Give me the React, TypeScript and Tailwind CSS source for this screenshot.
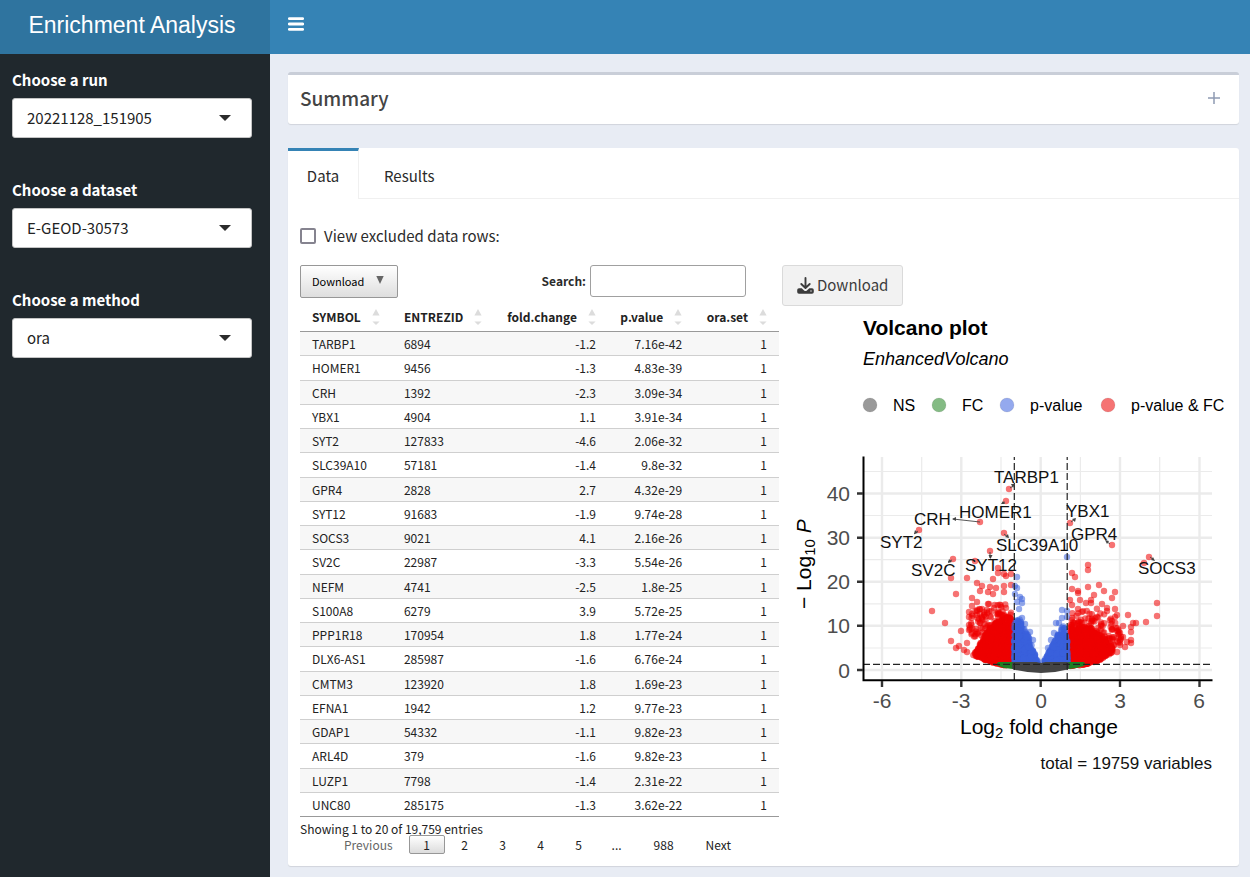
import React from "react";

const SANS = "font-['Noto_Sans_CJK_SC',sans-serif]";

type Row = [string, string, string, string];

const rows: Row[] = [
  ["TARBP1", "6894", "-1.2", "7.16e-42"],
  ["HOMER1", "9456", "-1.3", "4.83e-39"],
  ["CRH", "1392", "-2.3", "3.09e-34"],
  ["YBX1", "4904", "1.1", "3.91e-34"],
  ["SYT2", "127833", "-4.6", "2.06e-32"],
  ["SLC39A10", "57181", "-1.4", "9.8e-32"],
  ["GPR4", "2828", "2.7", "4.32e-29"],
  ["SYT12", "91683", "-1.9", "9.74e-28"],
  ["SOCS3", "9021", "4.1", "2.16e-26"],
  ["SV2C", "22987", "-3.3", "5.54e-26"],
  ["NEFM", "4741", "-2.5", "1.8e-25"],
  ["S100A8", "6279", "3.9", "5.72e-25"],
  ["PPP1R18", "170954", "1.8", "1.77e-24"],
  ["DLX6-AS1", "285987", "-1.6", "6.76e-24"],
  ["CMTM3", "123920", "1.8", "1.69e-23"],
  ["EFNA1", "1942", "1.2", "9.77e-23"],
  ["GDAP1", "54332", "-1.1", "9.82e-23"],
  ["ARL4D", "379", "-1.6", "9.82e-23"],
  ["LUZP1", "7798", "-1.4", "2.31e-22"],
  ["UNC80", "285175", "-1.3", "3.62e-22"],
];

/* ---------- sidebar ---------- */

function Picker({ id, label, options }: { id: string; label: string; options: string[] }) {
  return (
    <div className="flex flex-col gap-2">
      <label htmlFor={id} className="text-[15px] leading-5 font-bold text-white">
        {label}
      </label>
      <div className="relative">
        <select
          id={id}
          className="h-10 w-full appearance-none rounded-[3px] border border-[#c4c4c4] bg-white pl-[14px] pr-9 text-[15px] text-[#222]"
        >
          {options.map((o) => (
            <option key={o}>{o}</option>
          ))}
        </select>
        <svg
          viewBox="0 0 12 6"
          className="pointer-events-none absolute top-[17px] right-[21px] h-[6px] w-3"
          aria-hidden="true"
        >
          <path d="M0 0h12L6 6z" fill="#2b2b2b" />
        </svg>
      </div>
    </div>
  );
}

/* ---------- table ---------- */

function SortIcon() {
  return (
    <svg viewBox="0 0 8 16" className="absolute top-[6px] right-[12px] h-4 w-2" aria-hidden="true">
      <path d="M4 0l3.6 6.5H.4z M.4 12.5h7.2L4 16z" fill="#dcdcdc" />
    </svg>
  );
}

function Th({ children, className }: { children: string; className: string }) {
  return (
    <th scope="col" className={`relative border-b border-[#999] p-0 pl-3 font-bold ${className}`}>
      {children}
      <SortIcon />
    </th>
  );
}

function GeneTable() {
  return (
    <table className="mt-[5px] h-[514px] w-full table-fixed border-separate border-spacing-0 text-[12px] leading-4 text-[#222]">
      <thead>
        <tr className="h-[29px]">
          <Th className="w-[19.2%] text-left">SYMBOL</Th>
          <Th className="w-[21.3%] text-left">ENTREZID</Th>
          <Th className="w-[23.8%] pr-[31px] text-right">fold.change</Th>
          <Th className="w-[18%] pr-[31px] text-right">p.value</Th>
          <Th className="w-[17.7%] pr-[31px] text-right">ora.set</Th>
        </tr>
      </thead>
      <tbody>
        {rows.map(([symbol, id, fc, p], i) => {
          const edge = i === rows.length - 1 ? "border-[#999]" : "border-[#cfcfcf]";
          const cell = `border-b px-3 pt-px pb-0 ${edge}`;
          return (
            <tr key={symbol} className="odd:bg-[#f7f7f7]">
              <td className={cell}>{symbol}</td>
              <td className={cell}>{id}</td>
              <td className={`${cell} text-right`}>{fc}</td>
              <td className={`${cell} text-right`}>{p}</td>
              <td className={`${cell} text-right`}>1</td>
            </tr>
          );
        })}
      </tbody>
    </table>
  );
}

function Pager() {
  const base = "h-[19px] min-w-9 rounded-[2px] border px-3 leading-4";
  return (
    <nav aria-label="Table pages" className="-mt-[2px] flex items-center gap-[2px] pl-[31px] text-[12px] text-[#222]">
      <button className={`${base} mr-[1px] border-transparent text-[#666]`}>Previous</button>
      <button className={`${base} border-[#979797] bg-linear-to-b from-white to-[#dcdcdc]`}>1</button>
      {["2", "3", "4", "5"].map((n) => (
        <button key={n} className={`${base} border-transparent`}>
          {n}
        </button>
      ))}
      <span className="w-9 text-center leading-4">...</span>
      <button className={`${base} w-[54px] border-transparent`}>988</button>
      <button className={`${base} border-transparent`}>Next</button>
    </nav>
  );
}

/* ---------- volcano plot ---------- */

type Pt = [number, number];

const redPoints: Pt[] = [
  [1009, 489], [1006, 501], [980, 522], [919, 530], [1004, 533], [990, 551], [953, 559], [975, 561],
  [951, 578], [967, 578], [998, 568], [998, 573], [1006, 576], [1004, 574], [1011, 574], [993, 579], [956, 594], [977, 583],
  [982, 586], [980, 591], [990, 587], [996, 588], [1004, 586], [1011, 585], [988, 592], [993, 594],
  [1004, 592], [972, 598], [977, 602], [972, 606], [932, 611], [969, 612], [988, 604], [977, 610],
  [982, 609], [972, 614], [945, 623], [961, 631], [951, 641], [956, 648], [959, 646], [967, 643],
  [967, 652], [964, 650], [969, 625], [972, 633], [969, 630], [969, 617], [1070, 523], [1112, 545],
  [1149, 557], [1144, 563], [1088, 565], [1088, 570], [1072, 573], [1075, 577], [1099, 585], [1088, 587],
  [1072, 589], [1078, 591], [1078, 593], [1104, 591], [1115, 592], [1094, 595], [1112, 598], [1157, 603],
  [1157, 616], [1128, 615], [1117, 615], [1102, 604], [1107, 608], [1107, 611], [1080, 600], [1086, 603],
  [1091, 603], [1091, 600], [1115, 609], [1072, 605], [1078, 609], [1146, 622], [1136, 623], [1133, 623],
  [1123, 626], [1112, 629], [1131, 627], [1131, 632], [1123, 637], [1131, 640], [1131, 643], [1125, 647],
  [1117, 652], [1120, 645], [1127, 642], [1117, 631], [1112, 621], [1120, 640], [1070, 600], [1115, 617],
];

const bluePoints: Pt[] = [
  [1017, 577], [1015, 586], [1017, 588], [1020, 597], [1022, 599], [1017, 602], [1019, 609], [1015, 594],
  [1022, 603], [1067, 557], [1062, 610], [1067, 611], [1062, 618], [1059, 623], [1056, 623], [1054, 633],
  [1048, 648], [1051, 640], [1067, 617], [1022, 618], [1025, 624], [1030, 632], [1033, 640],
];

const redLeft: Pt[] = [[1012, 612], [1002, 617], [990, 628], [982, 640], [977, 650], [973, 655], [985, 660], [1000, 665], [1012, 666]];
const redRight: Pt[] = [[1070, 622], [1085, 622], [1096, 630], [1106, 640], [1114, 650], [1110, 654], [1098, 661], [1083, 665], [1070, 666]];
const blueLeft: Pt[] = [[1014, 612], [1017, 614], [1023, 626], [1029, 637], [1033, 650], [1038, 661], [1038, 666], [1014, 666]];
const blueRight: Pt[] = [[1067, 626], [1063, 625], [1055, 640], [1050, 650], [1044, 661], [1044, 666], [1068, 666]];

function inside([x, y]: Pt, poly: Pt[]) {
  let hit = false;
  for (let i = 0, j = poly.length - 1; i < poly.length; j = i++) {
    const [xi, yi] = poly[i];
    const [xj, yj] = poly[j];
    if (yi > y !== yj > y && x < ((xj - xi) * (y - yi)) / (yj - yi) + xi) hit = !hit;
  }
  return hit;
}

/* Seeded scatter, so that the cloud is the same on every render. */
function scatter(poly: Pt[], count: number, seed: number): Pt[] {
  let s = seed;
  const next = () => {
    s = (s * 1664525 + 1013904223) % 4294967296;
    return s / 4294967296;
  };
  const xs = poly.map((p) => p[0]);
  const ys = poly.map((p) => p[1]);
  const x0 = Math.min(...xs);
  const y0 = Math.min(...ys);
  const w = Math.max(...xs) - x0;
  const h = Math.max(...ys) - y0;
  const out: Pt[] = [];
  while (out.length < count) {
    const p: Pt = [x0 + next() * w, y0 + Math.pow(next(), 0.6) * h];
    if (inside(p, poly)) out.push(p);
  }
  return out;
}

const reds = [
  ...redPoints,
  ...scatter(redLeft, 900, 7),
  ...scatter([[1011, 592], [996, 600], [970, 614], [970, 640], [1011, 640]], 120, 21),
  ...scatter(redRight, 900, 11),
  ...scatter([[1071, 606], [1100, 608], [1116, 622], [1124, 640], [1112, 652], [1071, 640]], 130, 33),
];
const blues = [...bluePoints, ...scatter(blueLeft, 450, 5), ...scatter(blueRight, 450, 9)];

function Dots({ points, fill }: { points: Pt[]; fill: string }) {
  return (
    <g fill={fill} fillOpacity="0.55">
      {points.map(([x, y], i) => (
        <circle key={i} cx={x} cy={y} r="3.2" />
      ))}
    </g>
  );
}

const geneLabels: [string, number, number][] = [
  ["TARBP1", 994, 483],
  ["HOMER1", 959, 518],
  ["CRH", 914, 525],
  ["YBX1", 1066, 517],
  ["SYT2", 880, 548],
  ["SLC39A10", 996, 551],
  ["GPR4", 1071, 540],
  ["SYT12", 965, 571],
  ["SV2C", 911, 576],
  ["SOCS3", 1138, 574],
];

const legend: [string, string, number, number][] = [
  ["NS", "#999999", 870, 893],
  ["FC", "#84bb84", 939, 962],
  ["p-value", "#94a9ee", 1007, 1030],
  ["p-value & FC", "#f57373", 1108, 1131],
];

function VolcanoPlot() {
  return (
    <svg
      viewBox="782 306 445 480"
      className="block w-full overflow-visible font-['Liberation_Sans',sans-serif]"
      role="img"
      aria-label="Volcano plot"
    >
      <text x="863" y="335" fontSize="21" fontWeight="700">Volcano plot</text>
      <text x="863" y="365" fontSize="18" fontStyle="italic">EnhancedVolcano</text>
      {legend.map(([name, fill, cx, tx]) => (
        <g key={name}>
          <circle cx={cx} cy="405" r="7" fill={fill} stroke="#000" strokeOpacity="0.08" />
          <text x={tx} y="411" fontSize="16">{name}</text>
        </g>
      ))}

      <g stroke="#ebebeb" fill="none">
        <path strokeWidth="1.2" d="M921.7 457V680M1001 457V680M1080.4 457V680M1159.7 457V680M863 471.5H1212M863 515.5H1212M863 559.7H1212M863 603.8H1212M863 648H1212" />
        <path strokeWidth="2.4" d="M882 457V680M961.3 457V680M1040.7 457V680M1120 457V680M1199.5 457V680M863 493.5H1212M863 537.8H1212M863 581.8H1212M863 625.8H1212M863 670H1212" />
      </g>

      <Dots points={reds} fill="#ee0000" />
      <Dots points={blues} fill="#3a60dc" />
      <g strokeLinejoin="round" strokeWidth="4">
        <path d="M999 664H1013V667L1004 666zM1069 664H1083L1076 666L1069 667z" fill="#1f7f22" stroke="#1f7f22" />
        <path d="M1014 664H1036L1041 665L1046 664H1067V667.500Q1054 671 1041 671Q1028 671 1014 667.500z" fill="#444" stroke="#444" />
      </g>

      <g stroke="#222" strokeWidth="1.2" strokeDasharray="7 3" fill="none">
        <path d="M1014.300 680V457M1067.200 680V457M863 664.300H1212" />
      </g>

      <g stroke="#444" strokeWidth="0.900" fill="#444">
        <path d="M980 522L953 519M1010 488L1013 486M1005 502L1002 503M918 531L914 534M1004 534L1008 537M990 552V558M952 560L948 562M1071 522L1075 519M1110 544L1106 541M1150 557L1154 560" />
        <path stroke="none" d="M952 519l4-2v4zM1011 484l4 0-2 4zM1001 504l2-3 2 3zM914 534l1-4 3 3zM1009 538l-4-1 3-3zM990.500 559l-2-4h4zM948 563l1-4 3 3zM1076 518l-1 4-3-3zM1105 540l4 1-2 3zM1155 561l-4-1 2-3z" />
      </g>
      <g fontSize="17" fill="#111">
        {geneLabels.map(([name, x, y]) => (
          <text key={name} x={x} y={y}>{name}</text>
        ))}
      </g>

      <path d="M863.500 456.500V680.200H1212.500" fill="none" stroke="#000" strokeWidth="2" />
      <path
        d="M857 493.500h6M857 537.800h6M857 581.800h6M857 625.800h6M857 670h6M882 681v6M961.300 681v6M1040.700 681v6M1120 681v6M1199.500 681v6"
        stroke="#333"
        strokeWidth="2.400"
      />
      <g fontSize="21" fill="#4d4d4d">
        <g textAnchor="end">
          <text x="850" y="501">40</text>
          <text x="850" y="545">30</text>
          <text x="850" y="589">20</text>
          <text x="850" y="633">10</text>
          <text x="850" y="678">0</text>
        </g>
        <g textAnchor="middle">
          <text x="882" y="708">-6</text>
          <text x="961" y="708">-3</text>
          <text x="1041" y="708">0</text>
          <text x="1120" y="708">3</text>
          <text x="1199" y="708">6</text>
        </g>
      </g>
      <text x="960" y="734" fontSize="21">
        Log<tspan dy="4" fontSize="15">2</tspan>
        <tspan dy="-4"> fold change</tspan>
      </text>
      <text transform="translate(811 609) rotate(-90)" fontSize="21">
        − Log<tspan dy="4" fontSize="15">10</tspan>
        <tspan dy="-4" fontStyle="italic"> P</tspan>
      </text>
      <text x="1212" y="769" fontSize="17" textAnchor="end" fill="#111">total = 19759 variables</text>
    </svg>
  );
}

/* ---------- icons ---------- */

function BarsIcon() {
  return (
    <svg viewBox="0 0 16 14" className="h-[14px] w-4" aria-hidden="true">
      <path d="M1.300 1.600h13.400M1.300 7h13.400M1.300 12.400h13.400" stroke="#fff" strokeWidth="2.800" strokeLinecap="round" />
    </svg>
  );
}

function DownloadIcon() {
  return (
    <svg viewBox="0 0 17 17" className="h-[17px] w-[17px]" aria-hidden="true">
      <path d="M8.500 1v9.500M4.300 7l4.200 4 4.200-4" fill="none" stroke="#3c3c3c" strokeWidth="1.900" strokeLinecap="round" strokeLinejoin="round" />
      <path d="M2 11.300h2.700l2.400 2.200q1.400 1.200 2.800 0l2.400-2.200H15a1.800 1.800 0 0 1 1.800 1.800v1.800a1.800 1.800 0 0 1-1.800 1.800H2a1.800 1.800 0 0 1-1.800-1.800v-1.800A1.800 1.800 0 0 1 2 11.300z" fill="#3c3c3c" />
      <circle cx="14" cy="14" r="0.700" fill="#f2f2f2" />
    </svg>
  );
}

/* ---------- page ---------- */

export default function App() {
  return (
    <div className={`flex min-h-screen flex-col bg-[#e8ecf4] text-[#2b2b2b] ${SANS}`}>
      <header className="flex h-[54px]">
        <div className="flex w-[270px] shrink-0 items-center justify-center bg-[#2f749f] pb-1 pr-[6px] font-['Liberation_Sans',sans-serif] text-[23px] leading-8 text-white">
          Enrichment Analysis
        </div>
        <div className="flex flex-1 bg-[#3583b5] px-[18px] pt-[17px]">
          <button aria-label="Toggle navigation" className="h-[14px]">
            <BarsIcon />
          </button>
        </div>
      </header>

      <div className="flex flex-1">
        <aside className="flex w-[270px] shrink-0 flex-col gap-[42px] bg-[#20282d] pt-4 pr-[18px] pl-3">
          <Picker id="run" label="Choose a run" options={["20221128_151905"]} />
          <Picker id="dataset" label="Choose a dataset" options={["E-GEOD-30573"]} />
          <Picker id="method" label="Choose a method" options={["ora"]} />
        </aside>

        <main className="min-w-0 flex-1 pt-[18px] pr-[11px] pb-[11px] pl-[18px]">
          <section className="flex items-center justify-between rounded-[3px] border-t-[3px] border-[#c9ced8] bg-white pt-[10px] pr-[19px] pb-[14px] pl-3 shadow-[0_1px_1px_rgba(0,0,0,0.1)]">
            <h2 className="text-[19px] leading-[25px] font-medium text-[#444]">Summary</h2>
            <button aria-label="Expand summary" className="h-3 w-3">
              <svg viewBox="0 0 12 12" className="h-3 w-3" aria-hidden="true">
                <path d="M6 0v12M0 6h12" stroke="#8f9bb3" strokeWidth="1.500" />
              </svg>
            </button>
          </section>

          <section className="mt-6 rounded-[3px] bg-white shadow-[0_1px_1px_rgba(0,0,0,0.1)]">
            <div role="tablist" className="flex border-b border-[#f0f0f0] text-[15px] leading-5">
              <button role="tab" aria-selected="true" className="-mb-px w-[71px] border-t-[3px] border-r border-t-[#3583b5] border-r-[#f0f0f0] bg-white pt-[15px] pb-[13px]">
                Data
              </button>
              <button role="tab" aria-selected="false" className="border-t-[3px] border-transparent px-[25px] pt-[15px] pb-[12px]">
                Results
              </button>
            </div>

            <div className="px-3 pt-[26px] pb-3">
              <label className="flex items-center gap-2 text-[15px] leading-[22px]">
                <input type="checkbox" className="h-4 w-4 appearance-none rounded-[2px] border-2 border-[#85838f] bg-white" />
                View excluded data rows:
              </label>

              <div className="mt-[18px] grid grid-cols-[479fr_445fr] gap-[3px]">
                <div className="min-w-0">
                  <div className="flex items-start justify-between pr-[33px]">
                    <button className="flex h-[33px] w-[98px] items-center gap-3 rounded-[2px] border border-[#979797] bg-linear-to-b from-white to-[#dedede] pl-[11px] text-[11px] text-black">
                      Download
                      <svg viewBox="0 0 8 8" className="mb-1 h-2 w-2" aria-hidden="true">
                        <path d="M.3 0h7.400L4 8z" fill="#666" />
                      </svg>
                    </button>
                    <label className="flex items-center gap-1 text-[12px] font-bold text-[#2b2b2b]">
                      Search:
                      <input type="search" className="h-8 w-[156px] rounded-[3px] border border-[#a0a0a0] bg-white px-2 font-normal" />
                    </label>
                  </div>
                  <GeneTable />
                  <p className="pt-[3px] text-[12px] leading-[17px] text-[#222]">Showing 1 to 20 of 19,759 entries</p>
                  <Pager />
                </div>

                <div className="min-w-0">
                  <button className="flex h-[41px] items-center gap-[3px] rounded-[3px] border border-[#dadada] bg-[#f2f2f2] px-[14px] text-[15px] text-[#3c3c3c]">
                    <DownloadIcon />
                    Download
                  </button>
                  <VolcanoPlot />
                </div>
              </div>
            </div>
          </section>
        </main>
      </div>
    </div>
  );
}
